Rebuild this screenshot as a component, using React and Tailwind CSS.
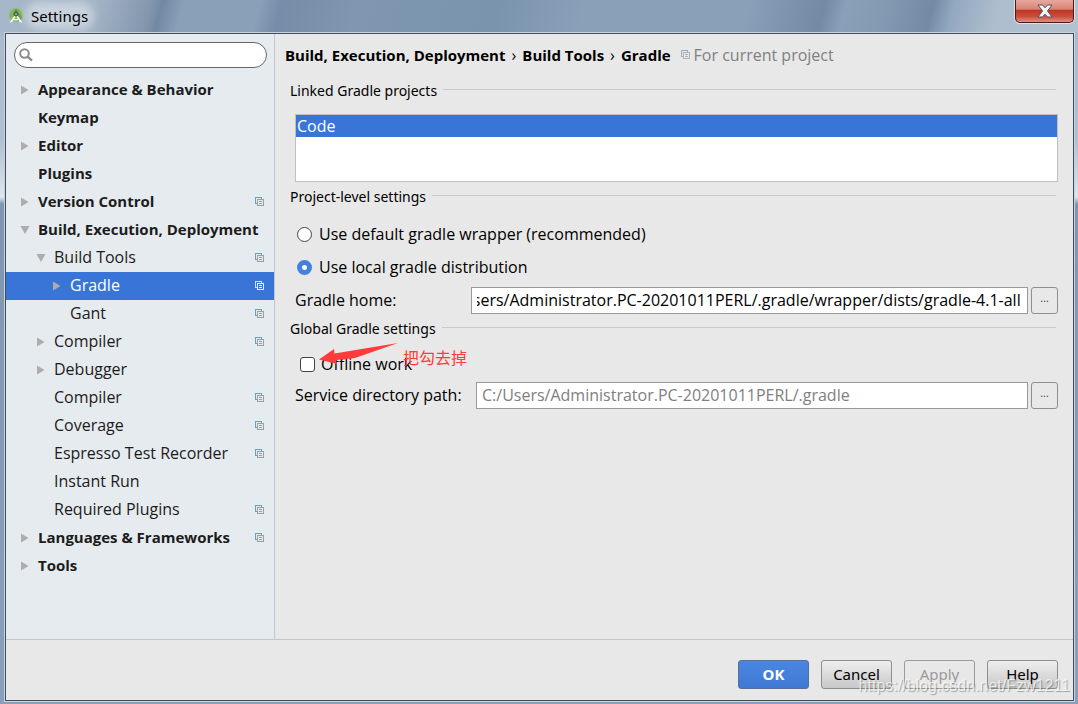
import React, { useEffect, useRef, useState } from 'react';

const TREE = [
  { id: 'appearance', label: 'Appearance & Behavior', depth: 0, arrow: 'closed' },
  { id: 'keymap', label: 'Keymap', depth: 0 },
  { id: 'editor', label: 'Editor', depth: 0, arrow: 'closed' },
  { id: 'plugins', label: 'Plugins', depth: 0 },
  { id: 'vcs', label: 'Version Control', depth: 0, arrow: 'closed', project: true },
  { id: 'build', label: 'Build, Execution, Deployment', depth: 0, arrow: 'open' },
  { id: 'build-tools', label: 'Build Tools', depth: 1, arrow: 'open', project: true },
  { id: 'gradle', label: 'Gradle', depth: 2, arrow: 'closed', project: true },
  { id: 'gant', label: 'Gant', depth: 2, project: true },
  { id: 'compiler-group', label: 'Compiler', depth: 1, arrow: 'closed', project: true },
  { id: 'debugger', label: 'Debugger', depth: 1, arrow: 'closed' },
  { id: 'compiler', label: 'Compiler', depth: 1, project: true },
  { id: 'coverage', label: 'Coverage', depth: 1, project: true },
  { id: 'espresso', label: 'Espresso Test Recorder', depth: 1, project: true },
  { id: 'instant-run', label: 'Instant Run', depth: 1 },
  { id: 'required-plugins', label: 'Required Plugins', depth: 1, project: true },
  { id: 'languages', label: 'Languages & Frameworks', depth: 0, arrow: 'closed', project: true },
  { id: 'tools', label: 'Tools', depth: 0, arrow: 'closed' },
];

const CRUMBS = ['Build, Execution, Deployment', 'Build Tools', 'Gradle'];

const INDENT = ['pl-[14px]', 'pl-[30px]', 'pl-[46px]'];

const AndroidStudioIcon = () => (
  <svg width="16" height="16" viewBox="0 0 16 16" className="shrink-0">
    <circle cx="8" cy="7" r="6.8" fill="#7dbb4c" />
    <path d="M9 3L14.3 9.6A6.8 6.8 0 0 1 9.5 13.6z" fill="#63a03c" />
    <path d="M6.9 6.8L2.4 13.6L2.2 15L4.4 13.8L8 8.2L11.6 13.8L13.8 15L13.6 13.6L9.1 6.8z" fill="#fff" />
    <path d="M4.6 11Q8 12.6 11.4 11" stroke="#fff" strokeWidth="1.2" fill="none" />
    <path d="M5 6.4L6.6 3.6H9.4L11 6.4L9 8.4H7z" fill="#4f6457" />
    <path d="M7.3 1.8H8.7V4H7.3z" fill="#4f6457" />
    <circle cx="8" cy="6" r="0.9" fill="#a9b8ae" />
  </svg>
);

const ProjectIcon = ({ selected, faded }) => (
  <svg
    width="10"
    height="10"
    viewBox="0 0 10 10"
    fill="none"
    shapeRendering="crispEdges"
    className={`shrink-0 ${faded ? 'opacity-70' : ''}`}
  >
    <path d="M2 6.5H0.5V0.5H6.5V2" stroke={selected ? '#cfe0ff' : '#6a9fbb'} />
    <path d="M2.5 2.5H8.5V8.5H2.5Z" stroke={selected ? '#e4edff' : '#9a9fa3'} />
    <path d="M4 4.5H7M4 6.5H7" stroke={selected ? '#e4edff' : '#9a9fa3'} />
  </svg>
);

const Arrow = ({ type }) => (
  <svg width="10" height="10" viewBox="0 0 10 10" fill="#adadad" className="shrink-0">
    {type === 'closed' && <path d="M1 0.5V9.5L8.5 5z" />}
    {type === 'open' && <path d="M0.5 1H9.5L5 9z" />}
  </svg>
);

const TreeRow = ({ item, selected, onSelect }) => (
  <li>
    <button
      type="button"
      onClick={() => onSelect(item.id)}
      className={`flex h-7 w-full items-center pr-[9px] text-left ${INDENT[item.depth]} ${
        selected ? 'bg-[#3875d7] text-white' : 'text-[#1c1c1c]'
      }`}
    >
      <Arrow type={item.arrow} />
      <span
        className={`ml-2 flex-1 whitespace-nowrap pb-[2px] ${
          item.depth === 0 ? 'text-[15px] leading-5 font-bold' : ''
        }`}
      >
        {item.label}
      </span>
      {item.project && <ProjectIcon selected={selected} />}
    </button>
  </li>
);

const GroupTitle = ({ children }) => (
  <div className="flex h-[30px] items-center gap-[6px] pl-[15px] pr-[17px] font-['Noto_Sans',sans-serif] text-sm">
    <h2>{children}</h2>
    <div className="mb-[3px] h-px flex-1 bg-[#c9c9c9]" />
  </div>
);

const Radio = ({ label, checked, onChange }) => (
  <label className="flex h-[33px] items-center gap-[7px] pl-[22px]">
    <input
      type="radio"
      name="distribution"
      checked={checked}
      onChange={onChange}
      className="size-[15px] appearance-none rounded-full border border-[#444] bg-white checked:border-[5px] checked:border-[#4480dd]"
    />
    <span className="pb-[2px]">{label}</span>
  </label>
);

const PathField = ({ id, label, labelWidth, value, onChange, muted }) => {
  const ref = useRef(null);

  // long paths show their tail
  useEffect(() => {
    ref.current.scrollLeft = ref.current.scrollWidth;
  }, []);

  return (
    <div className="flex h-[27px] items-center pl-5 pr-[15px]">
      <label htmlFor={id} className={`shrink-0 pb-[2px] ${labelWidth}`}>
        {label}
      </label>
      <input
        id={id}
        ref={ref}
        type="text"
        value={value}
        onChange={(e) => onChange(e.target.value)}
        className={`h-full min-w-0 flex-1 border border-[#999] bg-white pb-px pl-[5px] pr-[6px] outline-none ${
          muted ? 'text-[#808080]' : 'text-black'
        }`}
      />
      <button
        type="button"
        aria-label="Browse"
        className="ml-[3px] flex h-full w-[27px] items-center justify-center rounded-[3px] border border-[#8e8e8e] pb-[5px] text-[11px] text-[#444]"
      >
        …
      </button>
    </div>
  );
};

const FooterButton = ({ children, className }) => (
  <button
    type="button"
    className={`h-[29px] w-[71px] rounded-[3px] border pb-[2px] font-['Noto_Sans',sans-serif] text-[15px] leading-5 ${className}`}
  >
    {children}
  </button>
);

export default function App() {
  const [selected, setSelected] = useState('gradle');
  const [query, setQuery] = useState('');
  const [distribution, setDistribution] = useState('local');
  const [offline, setOffline] = useState(false);
  const [home, setHome] = useState('C:/Users/Administrator.PC-20201011PERL/.gradle/wrapper/dists/gradle-4.1-all');
  const [servicePath, setServicePath] = useState('C:/Users/Administrator.PC-20201011PERL/.gradle');

  return (
    <div className="relative flex min-h-screen flex-col bg-[linear-gradient(#a9b9cb_0%,#b0c0d2_20%,#dde5ee_28%,#7f96b2_29%,#89a0ba_100%)] font-['Open_Sans','Noto_Sans_CJK_SC',sans-serif] text-base leading-5 text-black">
      {/* Title bar */}
      <header className="flex h-8 items-start justify-between bg-[linear-gradient(105deg,#a6b7c9_0%,#a3b4c6_9%,#8396ae_14%,#7389a3_15%,#8aa0b9_17%,#8aa0b9_24%,#768ca8_26%,#7f97b0_33%,#7a94ae_46%,#8aa0b9_54%,#8aa0b9_69%,#7489a3_76%,#8aa0b9_78%,#8399b2_82%,#7489a3_86%,#93a8c1_88%,#aebdcd_92%,#b2c2d0_100%)] pl-1 pr-[3px]">
        <div className="flex h-8 items-center gap-[7px] pl-1">
          <AndroidStudioIcon />
          <h1 className="rounded-full bg-white/40 font-['Noto_Sans',sans-serif] text-[15px] leading-4 shadow-[0_0_8px_6px_rgba(255,255,255,0.4)]">
            Settings
          </h1>
        </div>
        <button
          type="button"
          aria-label="Close"
          className="mr-px flex h-[23px] w-[59px] items-center justify-center rounded-b-[5px] border border-t-0 border-[#4a1a1a] bg-[linear-gradient(#e8a79d_0%,#d98375_42%,#bf3520_46%,#c94f3c_75%,#e09080_100%)] shadow-[0_0_0_1px_rgba(255,255,255,0.55)]"
        >
          <svg width="16" height="14" viewBox="0 0 16 14">
            <path
              d="M1 1H5.5L8 3.8L10.5 1H15L10.5 7L15 13H10.5L8 10.2L5.5 13H1L5.5 7Z"
              fill="#f4f4f4"
              stroke="#50505c"
              strokeLinejoin="round"
            />
          </svg>
        </button>
      </header>

      <div className="mb-[2px] ml-1 mr-[3px] flex flex-1 flex-col border border-[#c8d3df]">
        <div className="flex flex-1 flex-col border border-[#3f4c5c] bg-[#e8e8e8]">
          <div className="flex flex-1 border-b border-[#c3c5c7]">
            {/* Settings tree */}
            <nav className="w-[269px] shrink-0 border-r border-[#c3c5c7] bg-[#e6ebef] pt-2">
              <label className="ml-2 mr-[7px] flex h-[26px] items-center rounded-full border border-[#666] bg-white pl-1">
                <svg width="14" height="14" viewBox="0 0 14 14" fill="none" stroke="#8c8c8c">
                  <circle cx="5.5" cy="5.5" r="4.3" strokeWidth="2" />
                  <path d="M8.8 8.8L13 12.6" strokeWidth="2.4" />
                </svg>
                <input
                  type="text"
                  aria-label="Search settings"
                  value={query}
                  onChange={(e) => setQuery(e.target.value)}
                  className="ml-1 min-w-0 flex-1 bg-transparent outline-none"
                />
              </label>
              <ul className="mt-2">
                {TREE.map((item) => (
                  <TreeRow
                    key={item.id}
                    item={item}
                    selected={item.id === selected}
                    onSelect={setSelected}
                  />
                ))}
              </ul>
            </nav>

            {/* Gradle page */}
            <main className="min-w-0 flex-1">
              <div className="flex h-[42px] items-center whitespace-nowrap pl-[10px]">
                {CRUMBS.map((crumb, i) => (
                  <React.Fragment key={crumb}>
                    {i > 0 && <span className="mx-[6px]">›</span>}
                    <span className="text-[15px] leading-5 font-bold">{crumb}</span>
                  </React.Fragment>
                ))}
                <span className="ml-[10px] flex items-center gap-[3px] text-[#808080]">
                  <ProjectIcon faded />
                  For current project
                </span>
              </div>

              <GroupTitle>Linked Gradle projects</GroupTitle>
              <ul className="ml-5 mr-[15px] mt-2 h-[68px] border border-[#c0c0c0] bg-white">
                <li className="h-[22px] bg-[#3875d7] pl-px leading-[22px] text-white">Code</li>
              </ul>

              <GroupTitle>Project-level settings</GroupTitle>
              <div className="mt-[6px]">
                <Radio
                  label="Use default gradle wrapper (recommended)"
                  checked={distribution === 'wrapper'}
                  onChange={() => setDistribution('wrapper')}
                />
                <Radio
                  label="Use local gradle distribution"
                  checked={distribution === 'local'}
                  onChange={() => setDistribution('local')}
                />
              </div>
              <div className="mt-[3px]">
                <PathField
                  id="gradle-home"
                  label="Gradle home:"
                  labelWidth="w-[176px]"
                  value={home}
                  onChange={setHome}
                />
              </div>

              <GroupTitle>Global Gradle settings</GroupTitle>
              <div className="relative mt-1">
                <label className="flex h-[34px] items-center gap-[6px] pb-[2px] pl-[25px]">
                  <input
                    type="checkbox"
                    checked={offline}
                    onChange={(e) => setOffline(e.target.checked)}
                    className="size-[15px] appearance-none rounded-[3px] border border-[#444] bg-white checked:bg-[#4480dd]"
                  />
                  Offline work
                </label>
                {/* Red note over the check box */}
                <svg width="82" height="22" viewBox="0 0 82 22" className="absolute -top-[5px] left-[44px]">
                  <path d="M0 16.5L15 6L15.5 10.5L79 0L36 15L17 17L18 21Z" fill="#ff3b3b" />
                </svg>
                <span className="absolute left-[128px] top-0 text-base leading-5 text-[#ff3b3b]">把勾去掉</span>
              </div>
              <PathField
                id="service-path"
                label="Service directory path:"
                labelWidth="w-[181px]"
                value={servicePath}
                onChange={setServicePath}
                muted
              />
            </main>
          </div>

          <footer className="flex h-[60px] items-start justify-end gap-3 pr-[15px] pt-5">
            <FooterButton className="border-[#5a6f96] bg-[linear-gradient(#4a86e0,#4079d4)] font-bold text-white">
              OK
            </FooterButton>
            <FooterButton className="border-[#8e8e8e] bg-[linear-gradient(#eeeeee,#c8c8c8)]">Cancel</FooterButton>
            <FooterButton className="border-[#9a9a9a] text-[#9a9a9a]">Apply</FooterButton>
            <FooterButton className="border-[#8e8e8e] bg-[linear-gradient(#eeeeee,#c8c8c8)]">Help</FooterButton>
          </footer>
        </div>
      </div>

      <span className="pointer-events-none absolute bottom-2 right-2 font-['Liberation_Sans',sans-serif] text-base leading-5 text-white/70 [text-shadow:1px_1px_1px_rgba(0,0,0,0.3)]">
        https://blog.csdn.net/Fzw1211
      </span>
    </div>
  );
}
